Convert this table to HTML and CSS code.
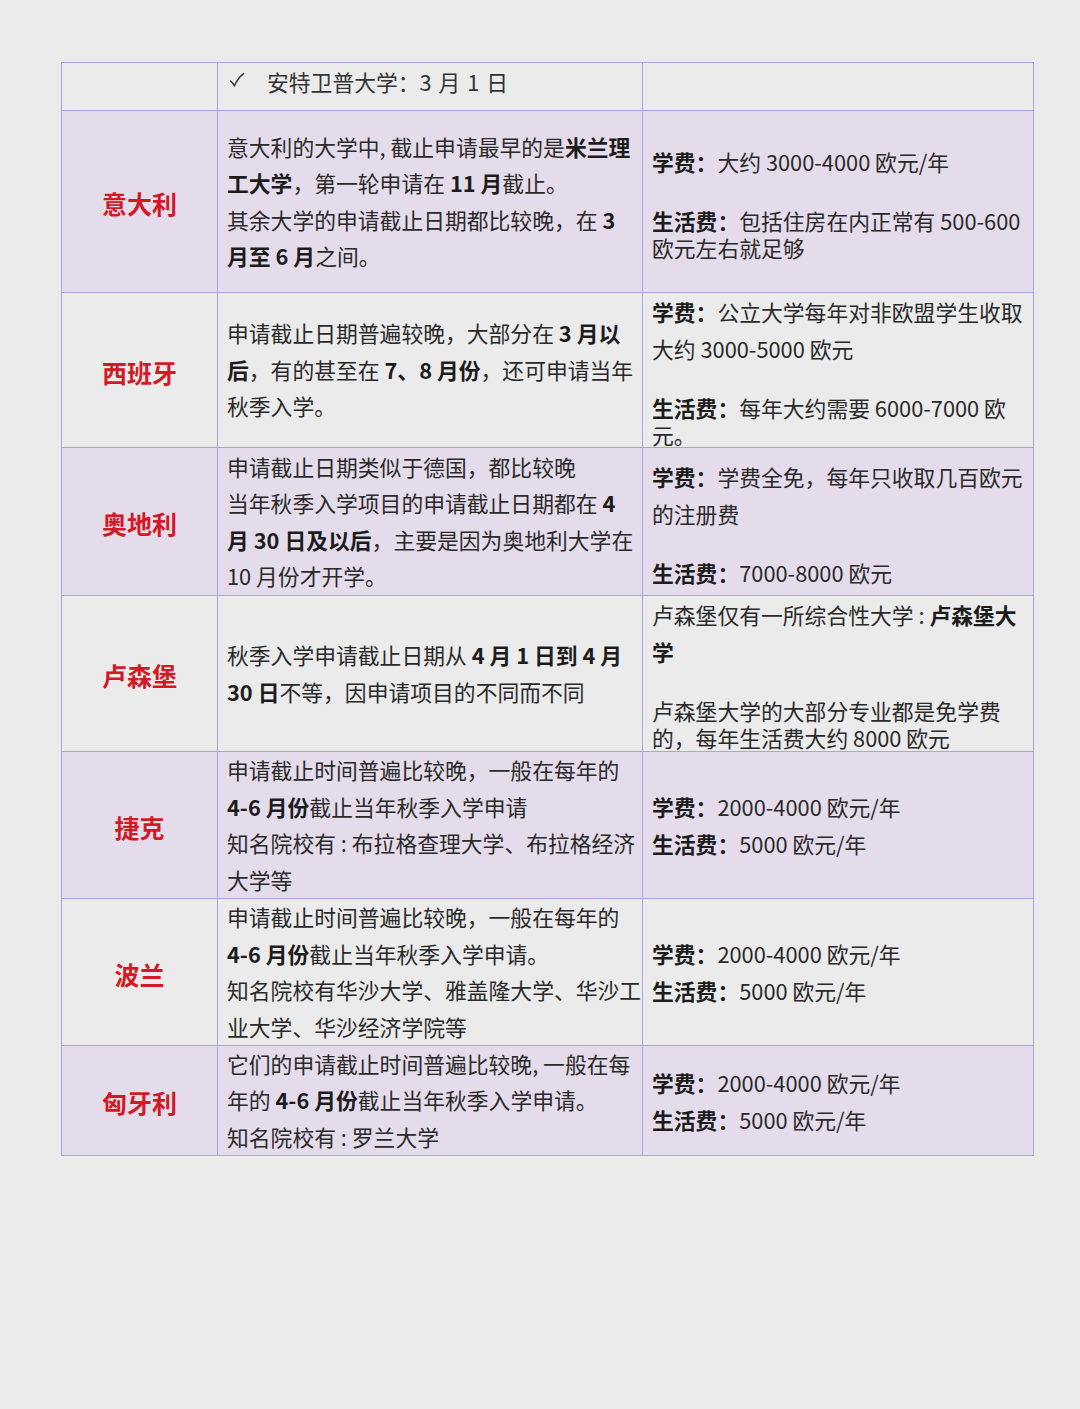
FILE: index.html
```html
<!DOCTYPE html>
<html lang="zh-CN">
<head>
<meta charset="utf-8">
<title>欧洲各国申请截止日期与费用</title>
<link rel="stylesheet" href="styles.css">
</head>
<body>
<div class="table">
  <!-- row 0 -->
  <div class="cell r0"></div>
  <div class="cell mid r0 first"><span class="line"><svg class="check" viewBox="0 0 16 16" width="16" height="16" aria-hidden="true"><path d="M1.5 9.2 C3 10.2 4.3 11.8 5.4 14 C7.6 8.6 10.6 4.6 14.6 1.6" fill="none" stroke="#333" stroke-width="1.4" stroke-linecap="round" stroke-linejoin="round"/></svg><span>安特卫普大学：3 月 1 日</span></span></div>
  <div class="cell r0"></div>

  <!-- Italy -->
  <div class="cell name alt r1">意大利</div>
  <div class="cell mid alt r1"><p>意大利的大学中, 截止申请最早的是<b>米兰理<br>工大学</b>，第一轮申请在 <b>11 月</b>截止。<br>其余大学的申请截止日期都比较晚，在 <b>3<br>月至 6 月</b>之间。</p></div>
  <div class="cell fee alt r1"><p class="p1"><b>学费：</b>大约 3000-4000 欧元/年</p><p class="p2"><b>生活费：</b>包括住房在内正常有 500-600<br>欧元左右就足够</p></div>

  <!-- Spain -->
  <div class="cell name r2">西班牙</div>
  <div class="cell mid r2"><p>申请截止日期普遍较晚，大部分在 <b>3 月以<br>后</b>，有的甚至在 <b>7、8 月份</b>，还可申请当年<br>秋季入学。</p></div>
  <div class="cell fee r2"><p class="p1"><b>学费：</b>公立大学每年对非欧盟学生收取<br>大约 3000-5000 欧元</p><p class="p2"><b>生活费：</b>每年大约需要 6000-7000 欧<br>元。</p></div>

  <!-- Austria -->
  <div class="cell name alt r3">奥地利</div>
  <div class="cell mid alt r3"><p>申请截止日期类似于德国，都比较晚<br>当年秋季入学项目的申请截止日期都在 <b>4<br>月 30 日及以后</b>，主要是因为奥地利大学在<br>10 月份才开学。</p></div>
  <div class="cell fee alt r3"><p class="p1"><b>学费：</b>学费全免，每年只收取几百欧元<br>的注册费</p><p class="p2"><b>生活费：</b>7000-8000 欧元</p></div>

  <!-- Luxembourg -->
  <div class="cell name r4">卢森堡</div>
  <div class="cell mid r4"><p>秋季入学申请截止日期从 <b>4 月 1 日到 4 月<br>30 日</b>不等，因申请项目的不同而不同</p></div>
  <div class="cell fee r4"><p class="p1">卢森堡仅有一所综合性大学 : <b>卢森堡大<br>学</b></p><p class="p2">卢森堡大学的大部分专业都是免学费<br>的，每年生活费大约 8000 欧元</p></div>

  <!-- Czech -->
  <div class="cell name alt r5">捷克</div>
  <div class="cell mid alt r5"><p>申请截止时间普遍比较晚，一般在每年的<br><b>4-6 月份</b>截止当年秋季入学申请<br>知名院校有 : 布拉格查理大学、布拉格经济<br>大学等</p></div>
  <div class="cell fee alt r5"><p class="p1"><b>学费：</b>2000-4000 欧元/年<br><b>生活费：</b>5000 欧元/年</p></div>

  <!-- Poland -->
  <div class="cell name r6">波兰</div>
  <div class="cell mid r6"><p>申请截止时间普遍比较晚，一般在每年的<br><b>4-6 月份</b>截止当年秋季入学申请。<br>知名院校有华沙大学、雅盖隆大学、华沙工<br>业大学、华沙经济学院等</p></div>
  <div class="cell fee r6"><p class="p1"><b>学费：</b>2000-4000 欧元/年<br><b>生活费：</b>5000 欧元/年</p></div>

  <!-- Hungary -->
  <div class="cell name alt r7">匈牙利</div>
  <div class="cell mid alt r7"><p>它们的申请截止时间普遍比较晚, 一般在每<br>年的 <b>4-6 月份</b>截止当年秋季入学申请。<br>知名院校有 : 罗兰大学</p></div>
  <div class="cell fee alt r7"><p class="p1"><b>学费：</b>2000-4000 欧元/年<br><b>生活费：</b>5000 欧元/年</p></div>
</div>
</body>
</html>
```

FILE: styles.css
```css
html, body {
  margin: 0;
  padding: 0;
  background: #ebebeb;
}

body {
  width: 1080px;
  height: 1409px;
  font-family: "Noto Sans CJK SC", "Noto Sans", sans-serif;
  color: #2a2a2a;
}

.table {
  margin: 62px 0 0 61px;
  width: 973px;
  box-sizing: border-box;
  display: grid;
  grid-template-columns: 155px 424px 390px;
  grid-template-rows: 47px 181px 154px 147px 155px 146px 146px 109px;
  gap: 1px;
  padding: 1px;
  background: #aaa3e6;
}

.cell {
  background: #ebebeb;
  display: flex;
  flex-direction: column;
  justify-content: center;
  padding: 0 9px;
  font-size: 21.8px;
  white-space: nowrap;
  overflow: visible;
  min-width: 0;
}

.cell.alt {
  background: #e5dceb;
}

.cell p {
  margin: 0;
}

.cell b {
  font-weight: 700;
  color: #1c1c1c;
}

.name {
  align-items: center;
  color: #d21a26;
  font-weight: 700;
  font-size: 25px;
  padding: 3px 0 0 0;
}

.mid p {
  line-height: 36.5px;
}

.first {
  justify-content: flex-start;
  padding-top: 1px;
  line-height: 36px;
  color: #333;
  word-spacing: 2px;
}

.line {
  display: flex;
  align-items: center;
}

.check {
  flex: none;
  margin: 0 22px 4px 2px;
}

.fee .p1 {
  line-height: 37px;
}

.fee .p2 {
  line-height: 27px;
  margin-top: 27px;
}
```
